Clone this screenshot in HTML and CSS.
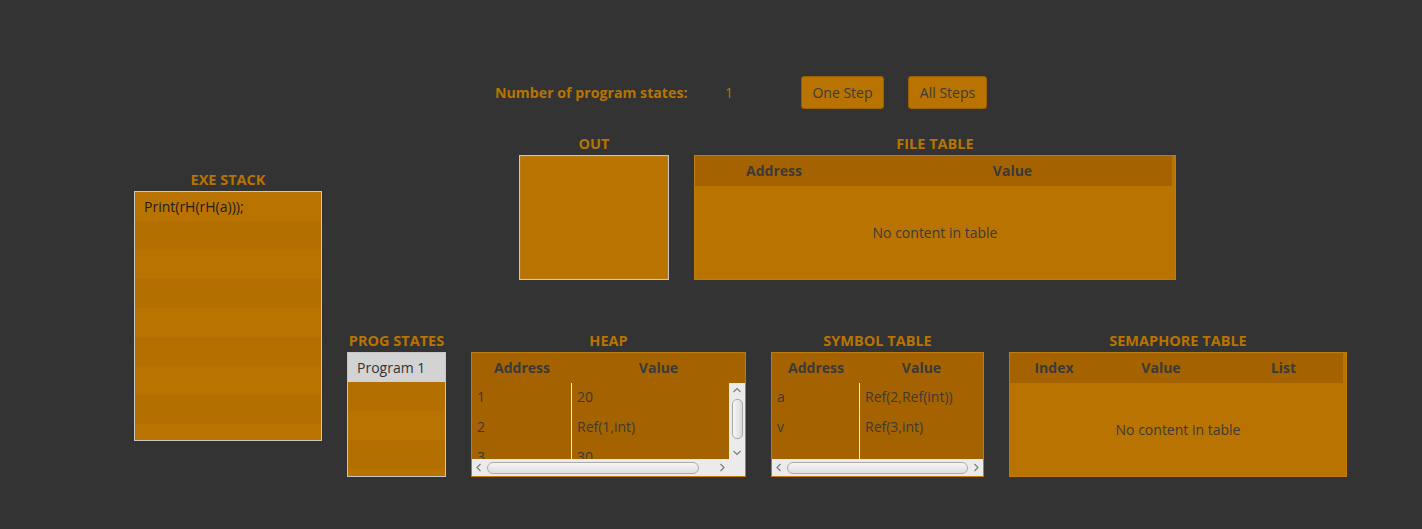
FILE: index.html
```html
<!DOCTYPE html>
<html lang="en">
<head>
<meta charset="utf-8">
<title>Interpreter</title>
<link rel="stylesheet" href="styles.css">
</head>
<body>
<div class="app">
  <div class="toolbar">
    <span class="count-label">Number of program states:</span>
    <span class="count">1</span>
    <button class="btn btn-one">One Step</button>
    <button class="btn btn-all">All Steps</button>
  </div>

  <div class="main">
    <section class="panel exe">
      <h2 class="title">EXE STACK</h2>
      <div class="list box exe-box">
        <div class="list-row exe-text">Print(rH(rH(a)));</div>
        <div class="list-row"></div>
        <div class="list-row"></div>
        <div class="list-row"></div>
        <div class="list-row"></div>
        <div class="list-row"></div>
        <div class="list-row"></div>
        <div class="list-row"></div>
        <div class="list-row"></div>
      </div>
    </section>

    <div class="right">
      <div class="row row-top">
        <section class="panel out">
          <h2 class="title">OUT</h2>
          <div class="list box out-box"></div>
        </section>

        <section class="panel file">
          <h2 class="title">FILE TABLE</h2>
          <div class="table box">
            <div class="thead filler">
              <div class="th file-c1">Address</div>
              <div class="th grow">Value</div>
            </div>
            <div class="tbody-empty">No content in table</div>
          </div>
        </section>
      </div>

      <div class="row row-bottom">
        <section class="panel prog">
          <h2 class="title">PROG STATES</h2>
          <div class="list box">
            <div class="list-row selected">Program 1</div>
            <div class="list-row"></div>
            <div class="list-row"></div>
            <div class="list-row"></div>
            <div class="list-row"></div>
          </div>
        </section>

        <section class="panel heap">
          <h2 class="title">HEAP</h2>
          <div class="table box">
            <div class="thead">
              <div class="th heap-c1">Address</div>
              <div class="th grow">Value</div>
            </div>
            <div class="tbody">
              <div class="cols">
                <div class="col col-first heap-c1">
                  <div class="cell">1</div>
                  <div class="cell">2</div>
                  <div class="cell">3</div>
                </div>
                <div class="col grow">
                  <div class="cell">20</div>
                  <div class="cell">Ref(1,int)</div>
                  <div class="cell">30</div>
                </div>
              </div>
              <div class="vscroll">
                <svg class="chev" width="16" height="12" viewBox="0 0 16 12"><polyline points="4.5,8 8,4.5 11.5,8" fill="none" stroke="#7a7a7a" stroke-width="1.1"/></svg>
                <div class="vthumb"></div>
                <div class="vspace"></div>
                <svg class="chev" width="16" height="12" viewBox="0 0 16 12"><polyline points="4.5,4 8,7.5 11.5,4" fill="none" stroke="#7a7a7a" stroke-width="1.1"/></svg>
              </div>
            </div>
            <div class="hscroll-row">
              <div class="hscroll">
                <svg class="hchev" width="12" height="17" viewBox="0 0 12 17"><polyline points="7.5,5 4,8.5 7.5,12" fill="none" stroke="#7a7a7a" stroke-width="1.1"/></svg>
                <div class="hthumb heap-thumb"></div>
                <div class="hspace"></div>
                <svg class="hchev" width="12" height="17" viewBox="0 0 12 17"><polyline points="4.5,5 8,8.5 4.5,12" fill="none" stroke="#7a7a7a" stroke-width="1.1"/></svg>
              </div>
              <div class="corner"></div>
            </div>
          </div>
        </section>

        <section class="panel symbol">
          <h2 class="title">SYMBOL TABLE</h2>
          <div class="table box">
            <div class="thead">
              <div class="th sym-c1">Address</div>
              <div class="th grow">Value</div>
            </div>
            <div class="tbody">
              <div class="cols">
                <div class="col col-first sym-c1">
                  <div class="cell">a</div>
                  <div class="cell">v</div>
                </div>
                <div class="col grow">
                  <div class="cell">Ref(2,Ref(int))</div>
                  <div class="cell">Ref(3,int)</div>
                </div>
              </div>
            </div>
            <div class="hscroll-row">
              <div class="hscroll">
                <svg class="hchev" width="12" height="17" viewBox="0 0 12 17"><polyline points="7.5,5 4,8.5 7.5,12" fill="none" stroke="#7a7a7a" stroke-width="1.1"/></svg>
                <div class="hthumb grow"></div>
                <svg class="hchev" width="12" height="17" viewBox="0 0 12 17"><polyline points="4.5,5 8,8.5 4.5,12" fill="none" stroke="#7a7a7a" stroke-width="1.1"/></svg>
              </div>
            </div>
          </div>
        </section>

        <section class="panel sema">
          <h2 class="title">SEMAPHORE TABLE</h2>
          <div class="table box">
            <div class="thead filler">
              <div class="th sema-c1">Index</div>
              <div class="th sema-c2">Value</div>
              <div class="th grow">List</div>
            </div>
            <div class="tbody-empty">No content in table</div>
          </div>
        </section>
      </div>
    </div>
  </div>
</div>
</body>
</html>
```

FILE: styles.css
```css
* {
  box-sizing: border-box;
}

html, body {
  margin: 0;
  background: #333333;
}

body {
  font-family: "Open Sans", "Noto Sans", sans-serif;
  font-size: 14px;
  color: #3a3a3a;
}

.app {
  width: 1422px;
  height: 529px;
  overflow: hidden;
  padding-top: 76px;
}

/* toolbar */
.toolbar {
  display: flex;
  align-items: center;
  height: 33px;
  padding-left: 495px;
}

.count-label {
  width: 230px;
  flex: none;
  font-size: 14.2px;
  font-weight: 700;
  color: #b87300;
  white-space: nowrap;
  padding-bottom: 1px;
}

.count {
  width: 76px;
  flex: none;
  color: #b87300;
  padding-bottom: 1px;
}

.btn {
  height: 33px;
  flex: none;
  padding: 0 0 1px;
  background: #b87300;
  border: 1px solid #9b6000;
  border-radius: 3px;
  color: #3b3b3b;
  font-family: inherit;
  font-size: 14px;
}

.btn-one {
  width: 83px;
}

.btn-all {
  width: 79px;
  margin-left: 24px;
}

/* layout */
.main {
  display: flex;
  align-items: flex-start;
  gap: 25px;
  padding-left: 134px;
  margin-top: 24px;
}

.right {
  display: flex;
  flex-direction: column;
  gap: 50px;
}

.row {
  display: flex;
  gap: 25px;
}

.row-top {
  padding-left: 172px;
}

.panel {
  display: flex;
  flex-direction: column;
  flex: none;
}

.title {
  height: 20px;
  margin: 0 0 2px;
  display: flex;
  justify-content: center;
  align-items: center;
  font-size: 14.5px;
  font-weight: 700;
  color: #b87300;
  white-space: nowrap;
}

.box {
  height: 125px;
}

.exe {
  width: 188px;
  margin-top: 36px;
}

.exe .box {
  height: 250px;
}

.out { width: 150px; }
.file { width: 482px; }
.prog { width: 99px; }
.heap { width: 275px; }
.symbol { width: 213px; }
.sema { width: 338px; }

/* lists */
.list {
  border: 1px solid #c6c6c6;
  background: #b87300;
  overflow: hidden;
}

.list-row {
  height: 29px;
  display: flex;
  align-items: center;
  padding-left: 9px;
  padding-bottom: 1px;
  white-space: nowrap;
}

.list-row:nth-child(even) {
  background: #b37000;
}

.exe-text {
  color: #1d1d1d;
}

.list-row.selected {
  background: #d3d3d3;
  color: #333333;
}

.out-box {
  box-shadow: inset 0 0 0 1px #b97a10;
}

/* tables */
.table {
  border: 1px solid #c07b08;
  background: #b87300;
  display: flex;
  flex-direction: column;
  overflow: hidden;
}

.thead {
  display: flex;
  flex: none;
  height: 30px;
  background: #a56300;
}

.thead.filler {
  margin-right: 3px;
}

.th {
  display: flex;
  align-items: center;
  justify-content: center;
  flex: none;
  font-weight: 700;
  color: #3a3a3a;
  white-space: nowrap;
  padding-bottom: 1px;
}

.grow {
  flex: 1 1 auto;
}

.file-c1 { width: 158px; }
.heap-c1 { width: 100px; flex: none; }
.sym-c1 { width: 88px; flex: none; }
.sema-c1 { width: 88px; }
.sema-c2 { width: 126px; }

.tbody-empty {
  flex: 1;
  display: flex;
  align-items: center;
  justify-content: center;
  color: #3b3b3b;
  padding-bottom: 1px;
}

.tbody {
  display: flex;
  height: 76px;
  flex: none;
}

.cols {
  flex: 1;
  display: flex;
  background: #a56300;
  overflow: hidden;
}

.col {
  display: flex;
  flex-direction: column;
}

.col-first {
  border-right: 1px solid #f3ebdf;
}

.cell {
  height: 30px;
  flex: none;
  display: flex;
  align-items: center;
  padding-left: 5px;
  padding-bottom: 3px;
  white-space: nowrap;
  color: #3c3a36;
}

/* scrollbars */
.vscroll {
  width: 16px;
  flex: none;
  background: #ebebeb;
  display: flex;
  flex-direction: column;
  align-items: center;
}

.chev {
  display: block;
  flex: none;
  margin-top: 1px;
}

.vthumb {
  width: 11px;
  height: 40px;
  margin-top: 3px;
  flex: none;
  border: 1px solid #a8a8a8;
  border-radius: 5px;
  background: linear-gradient(to right, #f6f6f6, #dcdcdc);
}

.vspace {
  flex: 1;
}

.hscroll-row {
  display: flex;
  height: 17px;
  flex: none;
}

.hscroll {
  flex: 1;
  display: flex;
  align-items: center;
  background: #ebebeb;
  padding: 0 1px;
}

.hchev {
  display: block;
  flex: none;
}

.hthumb {
  height: 12px;
  margin: 0 2px;
  border: 1px solid #aaaaaa;
  border-radius: 6px;
  background: linear-gradient(to bottom, #f6f6f6, #dddddd);
}

.heap-thumb {
  width: 212px;
  flex: none;
}

.hspace {
  flex: 1;
}

.corner {
  width: 16px;
  flex: none;
  background: #ebebeb;
}
```
